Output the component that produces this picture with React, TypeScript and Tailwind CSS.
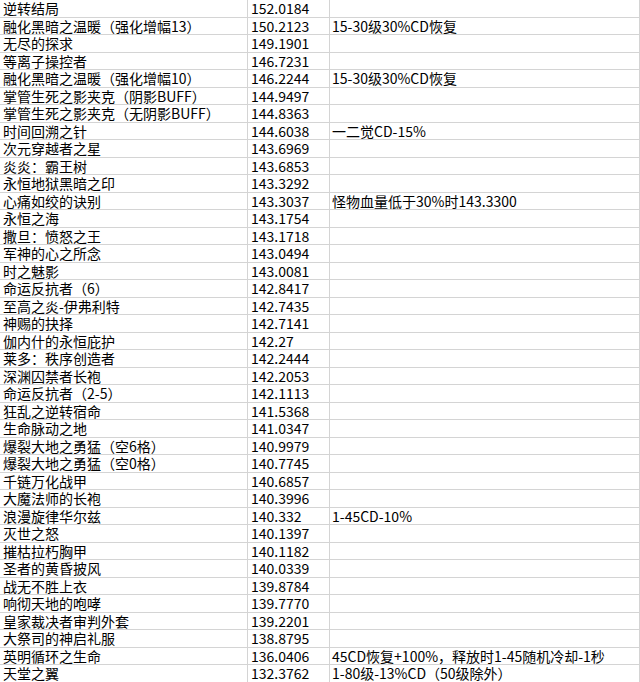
const rows: [string, string, string][] = [
  ['逆转结局', '152.0184', ''],
  ['融化黑暗之温暖（强化增幅13）', '150.2123', '15-30级30%CD恢复'],
  ['无尽的探求', '149.1901', ''],
  ['等离子操控者', '146.7231', ''],
  ['融化黑暗之温暖（强化增幅10）', '146.2244', '15-30级30%CD恢复'],
  ['掌管生死之影夹克（阴影BUFF）', '144.9497', ''],
  ['掌管生死之影夹克（无阴影BUFF）', '144.8363', ''],
  ['时间回溯之针', '144.6038', '一二觉CD-15%'],
  ['次元穿越者之星', '143.6969', ''],
  ['炎炎：霸王树', '143.6853', ''],
  ['永恒地狱黑暗之印', '143.3292', ''],
  ['心痛如绞的诀别', '143.3037', '怪物血量低于30%时143.3300'],
  ['永恒之海', '143.1754', ''],
  ['撒旦：愤怒之王', '143.1718', ''],
  ['军神的心之所念', '143.0494', ''],
  ['时之魅影', '143.0081', ''],
  ['命运反抗者（6）', '142.8417', ''],
  ['至高之炎-伊弗利特', '142.7435', ''],
  ['神赐的抉择', '142.7141', ''],
  ['伽内什的永恒庇护', '142.27', ''],
  ['莱多：秩序创造者', '142.2444', ''],
  ['深渊囚禁者长袍', '142.2053', ''],
  ['命运反抗者（2-5）', '142.1113', ''],
  ['狂乱之逆转宿命', '141.5368', ''],
  ['生命脉动之地', '141.0347', ''],
  ['爆裂大地之勇猛（空6格）', '140.9979', ''],
  ['爆裂大地之勇猛（空0格）', '140.7745', ''],
  ['千链万化战甲', '140.6857', ''],
  ['大魔法师的长袍', '140.3996', ''],
  ['浪漫旋律华尔兹', '140.332', '1-45CD-10%'],
  ['灭世之怒', '140.1397', ''],
  ['摧枯拉朽胸甲', '140.1182', ''],
  ['圣者的黄昏披风', '140.0339', ''],
  ['战无不胜上衣', '139.8784', ''],
  ['响彻天地的咆哮', '139.7770', ''],
  ['皇家裁决者审判外套', '139.2201', ''],
  ['大祭司的神启礼服', '138.8795', ''],
  ['英明循环之生命', '136.0406', '45CD恢复+100%，释放时1-45随机冷却-1秒'],
  ['天堂之翼', '132.3762', '1-80级-13%CD（50级除外）'],
];

export default function App() {
  return (
    <div className="w-[640px] h-[682px] overflow-hidden bg-white text-[14px] leading-[16px] text-black font-['Noto_Sans_CJK_SC',sans-serif]">
      <div className="grid grid-cols-[248px_82px_1fr] auto-rows-[17.5px]">
        {rows.map(([name, score, note], i) => (
          <div key={i} className="contents">
            <div className="flex items-center pl-[3px] border-r border-b border-[#d4d4d4] whitespace-nowrap">
              {name}
            </div>
            <div className="flex items-center pl-[3px] border-r border-b border-[#d4d4d4] whitespace-nowrap">
              {score}
            </div>
            <div className="flex items-center pl-[2px] border-r border-b border-[#d4d4d4] whitespace-nowrap">
              {note}
            </div>
          </div>
        ))}
      </div>
    </div>
  );
}
